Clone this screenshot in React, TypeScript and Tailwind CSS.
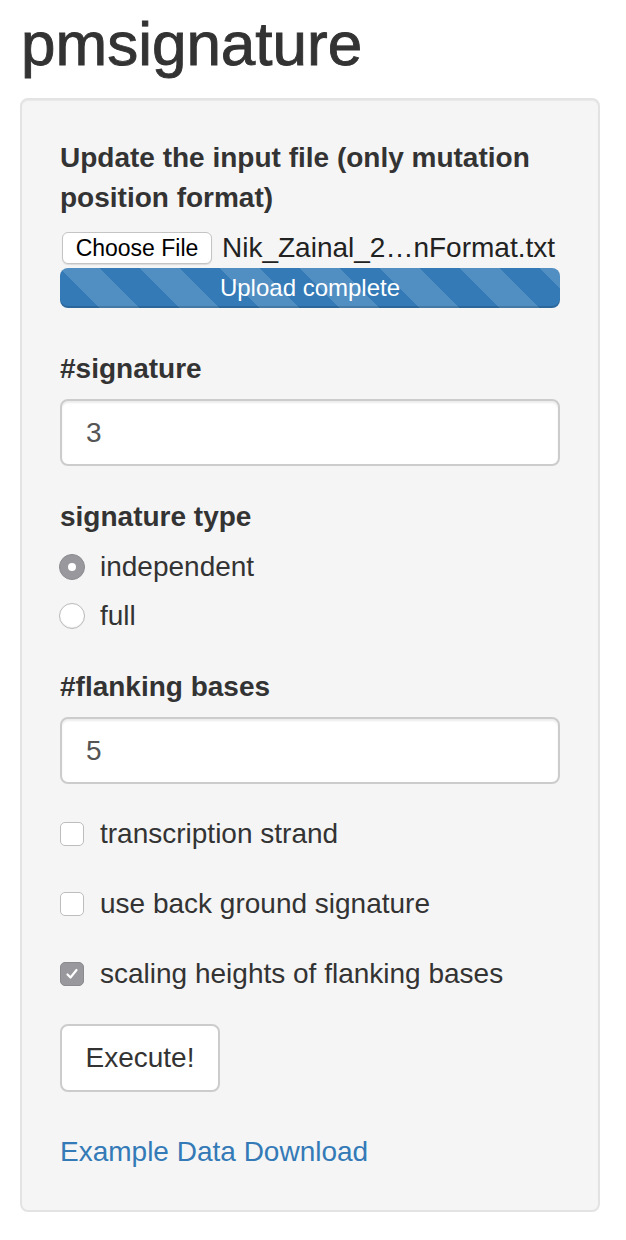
import React from "react";

const font = { fontFamily: '"Liberation Sans", Arial, Helvetica, sans-serif' };

function Radio({ checked, label, className }: { checked?: boolean; label: string; className?: string }) {
  return (
    <div className={`flex h-[40px] items-center ${className ?? ""}`}>
      <div className="ml-[-1px] w-[41px] flex items-center">
        {checked ? (
          <span className="flex h-[26px] w-[26px] items-center justify-center rounded-full bg-[#98989d] border border-[#8a8a8f]">
            <span className="h-[8px] w-[8px] rounded-full bg-white" />
          </span>
        ) : (
          <span className="h-[26px] w-[26px] rounded-full bg-white border border-[#b9b9b9] shadow-[inset_0_-1px_1px_rgba(0,0,0,0.08)]" />
        )}
      </div>
      <span className="text-[28px] leading-[40px] text-[#333]">{label}</span>
    </div>
  );
}

function Check({ checked, label, className }: { checked?: boolean; label: string; className?: string }) {
  return (
    <div className={`flex h-[40px] items-center ${className ?? ""}`}>
      <div className="w-[40px] flex items-center">
        {checked ? (
          <span className="flex h-[24px] w-[24px] items-center justify-center rounded-[5px] bg-[#98989d] border border-[#8a8a8f]">
            <svg width="16" height="16" viewBox="0 0 16 16">
              <path d="M3.5 8.5 L6.5 11.5 L12.5 4" fill="none" stroke="white" strokeWidth="2.2" strokeLinecap="round" strokeLinejoin="round" />
            </svg>
          </span>
        ) : (
          <span className="h-[24px] w-[24px] rounded-[5px] bg-white border border-[#bdbdbd]" />
        )}
      </div>
      <span className="text-[28px] leading-[40px] text-[#333]">{label}</span>
    </div>
  );
}

function Label({ children, className }: { children: React.ReactNode; className?: string }) {
  return <div className={`text-[28px] leading-[40px] font-bold text-[#333] ${className ?? ""}`}>{children}</div>;
}

function TextInput({ value, className }: { value: string; className?: string }) {
  return (
    <div
      className={`h-[67px] w-full rounded-[8px] border-2 border-[#cccccc] bg-white px-[24px] flex items-center text-[28px] text-[#555] shadow-[inset_0_2px_2px_rgba(0,0,0,0.075)] ${className ?? ""}`}
    >
      {value}
    </div>
  );
}

export default function App() {
  return (
    <div className="min-h-[1240px] w-[626px] bg-white" style={font}>
      <h2 className="ml-[21px] pt-[11px] h-[75px] text-[62px] leading-[66px] font-medium text-[#333] [-webkit-text-stroke:0.9px_#333]">
        pmsignature
      </h2>
      <div className="mx-[20px] mt-[23px] w-[580px] rounded-[8px] border-2 border-[#e3e3e3] bg-[#f5f5f5] px-[38px] pt-[38px] pb-[38px] shadow-[inset_0_1px_1px_rgba(0,0,0,0.05)]">
        <Label>Update the input file (only mutation position format)</Label>
        <div className="mt-[10px] flex h-[40px] items-center">
          <span className="ml-[2px] flex h-[32px] w-[150px] items-center justify-center rounded-[6px] border border-[#c4c4c4] bg-white text-[23px] text-black shadow-[0_1px_1px_rgba(0,0,0,0.1)]">
            Choose File
          </span>
          <span className="ml-[10px] text-[28px] text-[#222] whitespace-nowrap">Nik_Zainal_2…nFormat.txt</span>
        </div>
        <div
          className="flex h-[40px] items-center justify-center rounded-[8px] bg-[#337ab7] text-[24px] text-white shadow-[inset_0_-2px_0_rgba(0,0,0,0.15)]"
          style={{
            backgroundImage:
              "linear-gradient(45deg, rgba(255,255,255,.15) 25%, transparent 25%, transparent 50%, rgba(255,255,255,.15) 50%, rgba(255,255,255,.15) 75%, transparent 75%, transparent)",
            backgroundSize: "80px 80px",
          }}
        >
          Upload complete
        </div>

        <Label className="mt-[41px]">#signature</Label>
        <TextInput value="3" className="mt-[10px]" />

        <Label className="mt-[31px]">signature type</Label>
        <Radio checked label="independent" className="mt-[10px]" />
        <Radio label="full" className="mt-[9px]" />

        <Label className="mt-[31px]">#flanking bases</Label>
        <TextInput value="5" className="mt-[10px]" />

        <Check label="transcription strand" className="mt-[30px]" />
        <Check label="use back ground signature" className="mt-[30px]" />
        <Check checked label="scaling heights of flanking bases" className="mt-[30px]" />

        <div className="mt-[30px] flex h-[68px] w-[160px] items-center justify-center rounded-[8px] border-2 border-[#cccccc] bg-white text-[28px] text-[#333]">
          Execute!
        </div>

        <div className="mt-[40px] h-[40px] text-[28px] leading-[40px] text-[#337ab7]">Example Data Download</div>
      </div>
    </div>
  );
}
